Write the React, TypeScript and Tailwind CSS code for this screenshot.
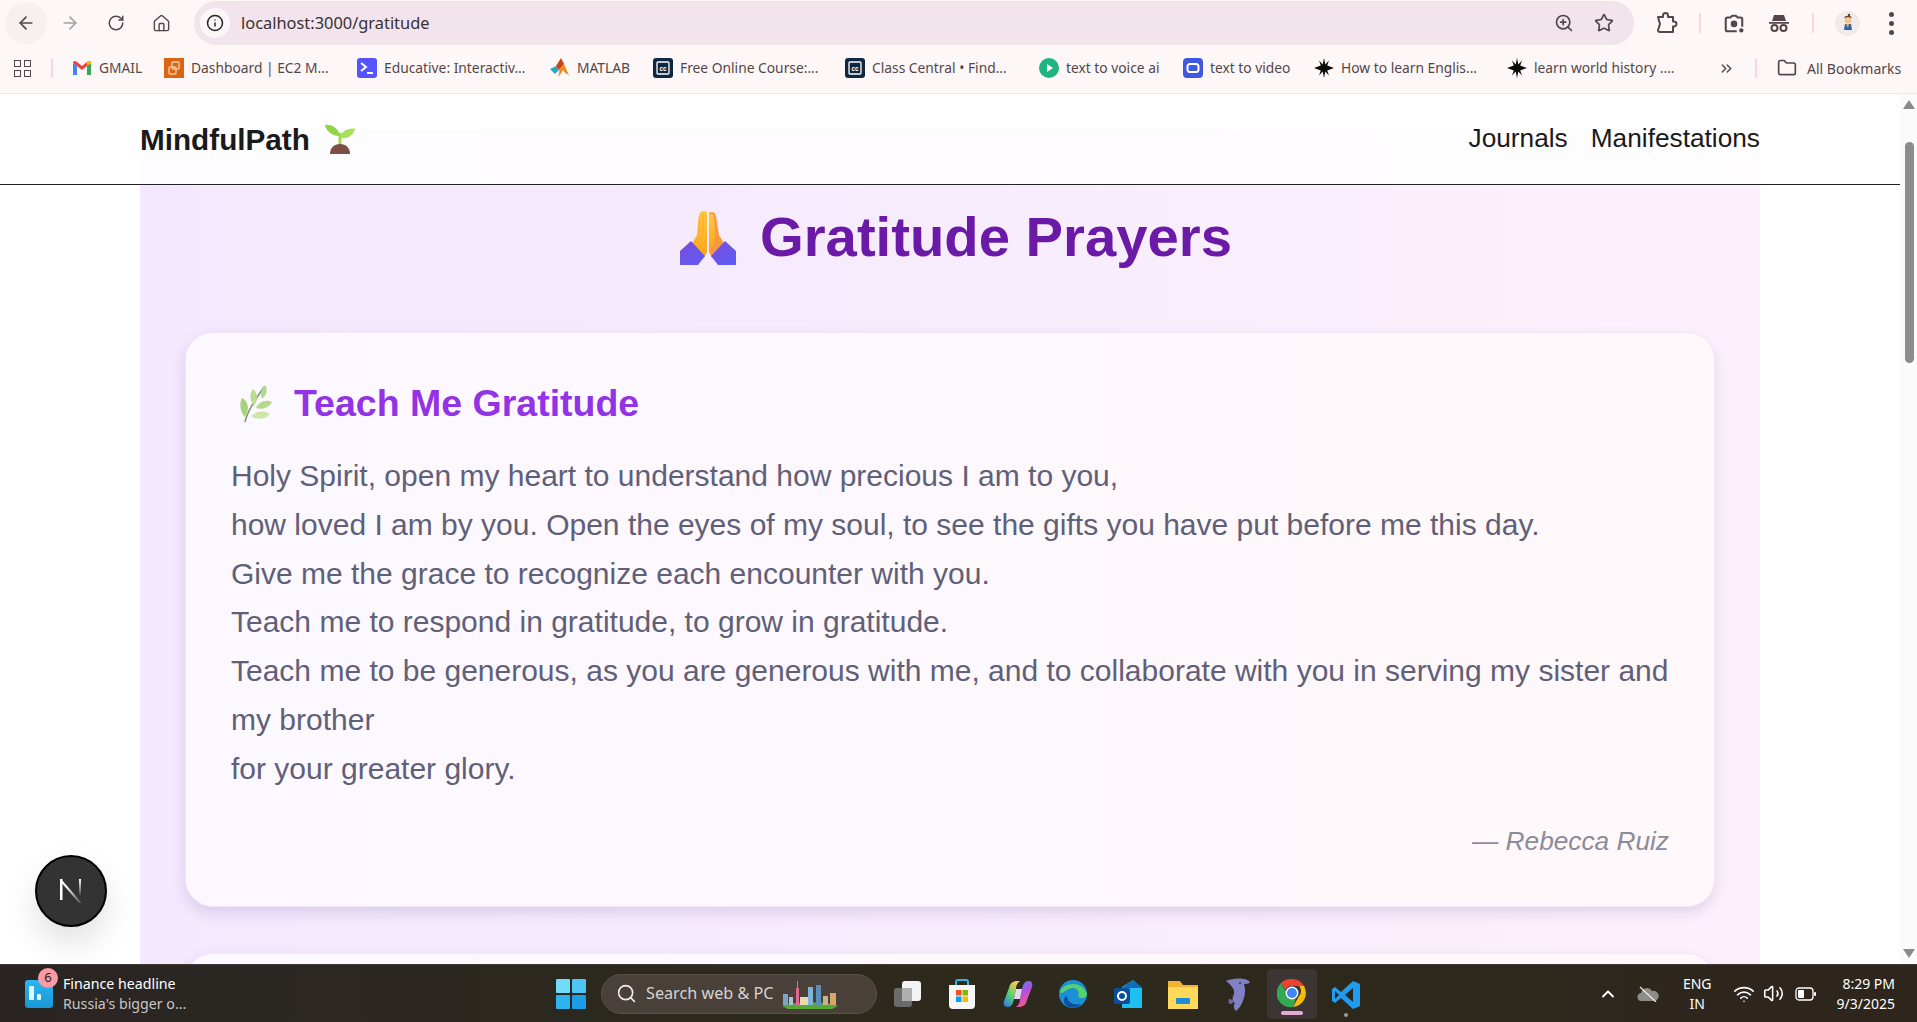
import {
  ArrowLeft,
  ArrowRight,
  ChevronUp,
  ChevronsRight,
  Folder,
  Home,
  Info,
  RotateCw,
  Search,
  Star,
  Volume2,
  Wifi,
  ZoomIn,
} from "lucide-react";

const BOOKMARKS = [
  { id: "gmail", label: "GMAIL", width: "w-[92px]" },
  { id: "ec2", label: "Dashboard | EC2 M...", width: "w-[193px]" },
  { id: "educative", label: "Educative: Interactiv...", width: "w-[193px]" },
  { id: "matlab", label: "MATLAB", width: "w-[103px]" },
  { id: "cc", label: "Free Online Course:...", width: "w-[192px]" },
  { id: "cc", label: "Class Central • Find...", width: "w-[194px]" },
  { id: "play", label: "text to voice ai", width: "w-[144px]" },
  { id: "video", label: "text to video", width: "w-[131px]" },
  { id: "star", label: "How to learn Englis...", width: "w-[193px]" },
  { id: "star", label: "learn world history ....", width: "w-[211px]" },
];

const CARD =
  "rounded-[28px] border border-[#f1e6fb] bg-gradient-to-r from-[#fbf8ff] to-[#fff8fa] shadow-[0_6px_14px_rgba(90,60,150,0.16)]";

function BookmarkIcon({ id }: { id: string }) {
  if (id === "gmail") {
    return (
      <svg viewBox="0 0 20 16" className="h-[16px] w-[20px]">
        <path d="M1 15V3l4 3v9z" fill="#4285f4" />
        <path d="M19 15V3l-4 3v9z" fill="#34a853" />
        <path d="M1 3c0-2 2-3 4-1l5 4 5-4c2-2 4-1 4 1l-4 3-5 4-5-4z" fill="#ea4335" />
        <path d="M15 2c2-2 4-1 4 1l-4 3z" fill="#fbbc04" />
      </svg>
    );
  }
  if (id === "ec2") {
    return (
      <svg viewBox="0 0 20 20" className="size-[20px]">
        <rect width="20" height="20" fill="#d86613" />
        <rect x="8" y="4" width="7" height="7" rx="1" fill="none" stroke="#f5c9a0" strokeWidth="1.4" />
        <rect x="5" y="9" width="7" height="7" rx="1" fill="none" stroke="#f5c9a0" strokeWidth="1.4" />
      </svg>
    );
  }
  if (id === "educative") {
    return (
      <svg viewBox="0 0 20 20" className="size-[20px]">
        <rect width="20" height="20" rx="3" fill="#5553ff" />
        <path d="M4 5l5 4-5 4" fill="none" stroke="#fff" strokeWidth="2" />
        <path d="M10 15h6" stroke="#fff" strokeWidth="2" />
      </svg>
    );
  }
  if (id === "matlab") {
    return (
      <svg viewBox="0 0 20 20" className="size-[20px]">
        <path d="M0 11l6-3 3 4-4 4z" fill="#2aa5c7" />
        <path d="M6 8l5-8 3 6-5 6z" fill="#c8451b" />
        <path d="M11 0c3 4 5 12 8 17-3-1-5-3-6-5-1 2-3 5-5 7 1-3 2-6 1-7l5-6z" fill="#ee8a1d" />
      </svg>
    );
  }
  if (id === "cc") {
    return (
      <svg viewBox="0 0 20 20" className="size-[20px]">
        <rect width="20" height="20" rx="3" fill="#0f2740" />
        <rect x="4" y="4" width="12" height="12" rx="1" fill="none" stroke="#fff" strokeWidth="1.3" />
        <text x="10" y="12.5" textAnchor="middle" fontSize="6.5" fontWeight="700" fill="#fff" fontFamily="Liberation Sans, sans-serif">
          cc
        </text>
      </svg>
    );
  }
  if (id === "play") {
    return (
      <svg viewBox="0 0 20 20" className="size-[20px]">
        <circle cx="10" cy="10" r="10" fill="#1fb583" />
        <path d="M8 6l6 4-6 4z" fill="#fff" />
      </svg>
    );
  }
  if (id === "video") {
    return (
      <svg viewBox="0 0 20 20" className="size-[20px]">
        <rect width="20" height="20" rx="4" fill="#4059e0" />
        <rect x="4.5" y="6" width="11" height="8" rx="2.5" fill="none" stroke="#fff" strokeWidth="2" />
      </svg>
    );
  }
  return (
    <svg viewBox="0 0 20 20" className="size-[20px]">
      <path
        d="M10 0l1.300 6.500L15 2.500l-1.800 5L20 10l-6.800 2.500 1.800 5-3.700-4L10 20l-1.300-6.500-3.700 4 1.800-5L0 10l6.800-2.500-1.800-5 3.700 4z"
        fill="#0b0b0b"
      />
    </svg>
  );
}

function Toolbar() {
  return (
    <div className="flex h-[46px] items-center bg-[#fef7f8] pl-[5px] text-[#544648]">
      <div className="flex size-[42px] items-center justify-center rounded-full bg-[#f6f0f1]">
        <ArrowLeft size={20} strokeWidth={2} />
      </div>
      <div className="ml-[2px] flex size-[42px] items-center justify-center text-[#a9a0a2]">
        <ArrowRight size={20} strokeWidth={2} />
      </div>
      <div className="ml-[4px] flex size-[42px] items-center justify-center">
        <RotateCw size={18} strokeWidth={2} />
      </div>
      <div className="ml-[3px] flex size-[42px] items-center justify-center">
        <Home size={19} strokeWidth={1.8} />
      </div>
      <div className="ml-[12px] flex h-[44px] w-[1440px] items-center rounded-full bg-[#f1e4ec] pl-[6px] pr-[20px]">
        <div className="flex size-[30px] items-center justify-center rounded-full bg-[#fdf6f8]">
          <Info size={18} strokeWidth={2} className="text-[#2b2324]" />
        </div>
        <span className="ml-[11px] font-['Noto_Sans',sans-serif] text-[16.400px] text-[#3a3032]">localhost:3000/gratitude</span>
        <div className="flex-1" />
        <ZoomIn size={20} strokeWidth={2} />
        <Star size={20} strokeWidth={2} className="ml-[20px]" />
      </div>
      <svg viewBox="0 0 24 24" className="ml-[20px] size-[24px]" fill="none" stroke="currentColor" strokeWidth="2" strokeLinejoin="round">
        <path d="M4 6h5V4.500a2.500 2.500 0 0 1 5 0V6h5v4.500h1a2.500 2.500 0 0 1 0 5h-1V21H6a2 2 0 0 1-2-2l2-6z" />
      </svg>
      <div className="ml-[21px] h-[20px] w-[2px] bg-[#fcd5de]" />
      <svg viewBox="0 0 24 24" className="ml-[22px] size-[22px]" fill="none" stroke="currentColor" strokeWidth="2.2">
        <path d="M3 19V8a2 2 0 0 1 2-2h3l2-2h4l2 2h3a2 2 0 0 1 2 2v8M3 19a2 2 0 0 0 2 2h10" />
        <circle cx="12" cy="13" r="2.500" fill="currentColor" />
        <circle cx="20" cy="20" r="1.300" fill="currentColor" />
      </svg>
      <svg viewBox="0 0 24 24" className="ml-[22px] size-[24px]" fill="currentColor">
        <path d="M7 4h10l2 6H5zM2 11h20v1.800H2z" />
        <circle cx="7.500" cy="17" r="3" fill="none" stroke="currentColor" strokeWidth="2" />
        <circle cx="16.500" cy="17" r="3" fill="none" stroke="currentColor" strokeWidth="2" />
      </svg>
      <div className="ml-[21px] h-[20px] w-[2px] bg-[#fcd5de]" />
      <div className="ml-[21px] flex size-[25px] items-center justify-center rounded-full bg-[#eeebe8]">
        <svg viewBox="0 0 20 20" className="size-[20px]">
          <circle cx="10" cy="7" r="3.500" fill="#f2c39b" />
          <path d="M6 5c1-3 7-3 8 0l-4-1z" fill="#6a3b1e" />
          <circle cx="11" cy="2" r="1.200" fill="#6a3b1e" />
          <path d="M7 11h6l1 6H6z" fill="#2f62b5" />
          <path d="M8 11h3l-1 4z" fill="#e8b33a" />
        </svg>
      </div>
      <div className="ml-[29px] flex flex-col gap-[4px]">
        <div className="size-[5px] rounded-full bg-[#544648]" />
        <div className="size-[5px] rounded-full bg-[#544648]" />
        <div className="size-[5px] rounded-full bg-[#544648]" />
      </div>
    </div>
  );
}

function BookmarksBar() {
  return (
    <div className="flex h-[48px] items-center border-b border-[#f2e4e6] bg-[#fef7f8] pb-[3px] font-['Noto_Sans',sans-serif] text-[13.800px] text-[#544648]">
      <div className="ml-[14px] grid grid-cols-2 gap-[3px]">
        <div className="size-[7px] border-[1.500px] border-[#544648]" />
        <div className="size-[7px] border-[1.500px] border-[#544648]" />
        <div className="size-[7px] border-[1.500px] border-[#544648]" />
        <div className="size-[7px] border-[1.500px] border-[#544648]" />
      </div>
      <div className="ml-[20px] h-[20px] w-[2px] bg-[#fcd5de]" />
      <div className="ml-[19px] flex items-center">
        {BOOKMARKS.map((b) => (
          <div key={b.label} className={`flex items-center gap-[7px] whitespace-nowrap ${b.width}`}>
            <BookmarkIcon id={b.id} />
            <span>{b.label}</span>
          </div>
        ))}
      </div>
      <ChevronsRight size={17} strokeWidth={2} />
      <div className="ml-[20px] h-[20px] w-[2px] bg-[#fcd5de]" />
      <Folder size={20} strokeWidth={2} className="ml-[20px]" />
      <span className="ml-[10px] whitespace-nowrap text-[14px]">All Bookmarks</span>
    </div>
  );
}

function Sprout() {
  return (
    <svg viewBox="0 0 30 30" className="-mt-[2px] h-[30px] w-[30px]">
      <path d="M13.500 9h3v13h-3z" fill="#a5d64a" />
      <path d="M14.500 12C7 12 1 7 0 1c6-1 14 3 14.500 11z" fill="#8ed444" />
      <path d="M15.500 14c0-6 6-10 14.500-9.500-1 6-6 10.500-14.500 9.500z" fill="#a4e25a" />
      <path d="M5 30c0-6 4-10 10-10s10 4 10 10z" fill="#7d4f47" />
    </svg>
  );
}

function PrayingHands() {
  return (
    <svg viewBox="0 0 56 56" className="h-[56px] w-[56px] shrink-0">
      <defs>
        <linearGradient id="hand" x1="0" y1="0" x2="0" y2="1">
          <stop offset="0" stopColor="#ffc83d" />
          <stop offset="1" stopColor="#fda21c" />
        </linearGradient>
        <linearGradient id="sleeve" x1="0" y1="0" x2="1" y2="1">
          <stop offset="0" stopColor="#7c4ddc" />
          <stop offset="1" stopColor="#5c5cf5" />
        </linearGradient>
      </defs>
      <path d="M27 3c-3-2-7-1-8 3l-2 20-6 10 13 13 3-6z" fill="url(#hand)" />
      <path d="M29 4c3-2 6-1 7 3l3 19 6 10-13 13-3-6z" fill="#fb9a3c" />
      <path d="M29 6c3-2 5-1 5 3l1 17c0 6-3 10-6 17z" fill="url(#hand)" />
      <path d="M23 5v18M19 8v14" stroke="#f5a623" strokeWidth="0.800" />
      <path d="M0 42l11-10 14 15-7 9H0z" fill="url(#sleeve)" />
      <path d="M56 42L45 32 31 47l7 9h18z" fill="url(#sleeve)" />
    </svg>
  );
}

function Herb() {
  return (
    <svg viewBox="0 0 32 38" className="ml-[9px] h-[38px] w-[32px] shrink-0">
      <path d="M5 37C7 27 14 16 24 2" fill="none" stroke="#7f9a72" strokeWidth="1.600" />
      <path d="M25 0c3 5 2 10-3 14-2-5-1-10 3-14z" fill="#b4d98a" />
      <path d="M13 4c5 4 5 11 1 17-4-5-5-12-1-17z" fill="#bcdc90" />
      <path d="M32 17c-3 6-10 8-16 6 3-6 10-9 16-6z" fill="#b4d98a" />
      <path d="M2 13c6 3 8 11 3 19-5-5-6-14-3-19z" fill="#a9d27e" />
      <path d="M30 29c-5 6-14 6-19 2 5-5 14-6 19-2z" fill="#cfe6a8" />
    </svg>
  );
}

function PrayerCard() {
  return (
    <div className={`${CARD} px-[45px] pb-[45px] pt-[48px]`}>
      <div className="flex items-center gap-[22px]">
        <Herb />
        <h2 className="text-[37.500px] font-bold leading-[45px] text-[#9333e6]">Teach Me Gratitude</h2>
      </div>
      <p className="mt-[26px] text-[30px] leading-[48.750px] text-[#5f6078]">
        Holy Spirit, open my heart to understand how precious I am to you,
        <br />
        how loved I am by you. Open the eyes of my soul, to see the gifts you have put before me this day.
        <br />
        Give me the grace to recognize each encounter with you.
        <br />
        Teach me to respond in gratitude, to grow in gratitude.
        <br />
        Teach me to be generous, as you are generous with me, and to collaborate with you in serving my sister and my brother
        <br />
        for your greater glory.
      </p>
      <p className="mt-[29px] text-right text-[26.250px] italic leading-[39px] text-[#8a8c9a]">— Rebecca Ruiz</p>
    </div>
  );
}

function WebPage() {
  return (
    <div className="relative min-w-0 flex-1 overflow-hidden bg-white font-['Liberation_Sans',Arial,sans-serif]">
      <header className="absolute inset-x-0 top-0 z-10 flex h-[91px] items-start justify-between border-b border-[#222] bg-white/85 pl-[140px] pr-[140px] pt-[26px] text-[#1a1a1a]">
        <div className="flex items-center gap-[15px]">
          <span className="text-[29.700px] font-bold leading-[40px]">MindfulPath</span>
          <Sprout />
        </div>
        <nav className="flex gap-[23px] text-[26.250px] leading-[36px]">
          <span>Journals</span>
          <span>Manifestations</span>
        </nav>
      </header>
      <main className="mx-[140px] mt-[35px] h-[1400px] bg-gradient-to-r from-[#f3e8fd] to-[#fcf1fb] px-[45px] pt-[76px]">
        <h1 className="flex items-center justify-center gap-[24px] pl-[12px] text-[56.250px] font-bold leading-[64px] text-[#6b1aa8]">
          <PrayingHands />
          Gratitude Prayers
        </h1>
        <div className="mt-[63px] flex flex-col gap-[46px]">
          <PrayerCard />
          <div className={`${CARD} h-[573px]`} />
        </div>
      </main>
      <button className="absolute bottom-[37px] left-[35px] z-20 flex size-[72px] items-center justify-center rounded-full border-2 border-black bg-[#333] shadow-[0_16px_32px_rgba(0,0,0,0.12)]">
        <svg viewBox="0 0 30 30" className="size-[30px]">
          <defs>
            <linearGradient id="nfade" x1="0" y1="0" x2="1" y2="1">
              <stop offset="0.3" stopColor="#fff" />
              <stop offset="1" stopColor="#fff" stopOpacity="0.1" />
            </linearGradient>
            <linearGradient id="nbar" x1="0" y1="0" x2="0" y2="1">
              <stop offset="0" stopColor="#fff" />
              <stop offset="1" stopColor="#fff" stopOpacity="0.1" />
            </linearGradient>
          </defs>
          <path d="M4 3h2.500v21H4z" fill="#fff" />
          <path d="M5 3l21 24h-3L4 5z" fill="url(#nfade)" />
          <path d="M23 3h2v16h-2z" fill="url(#nbar)" />
        </svg>
      </button>
    </div>
  );
}

function Scrollbar() {
  return (
    <div className="flex w-[17px] shrink-0 flex-col items-center bg-[#fbfbfb] pt-[6px]">
      <div className="h-0 w-0 border-x-[6px] border-b-[9px] border-x-transparent border-b-[#8a8a8a]" />
      <div className="ml-[1px] mt-[33px] h-[221px] w-[9px] rounded-full bg-[#8c8c8c]" />
      <div className="flex-1" />
      <div className="mb-[6px] h-0 w-0 border-x-[6px] border-t-[9px] border-x-transparent border-t-[#8a8a8a]" />
    </div>
  );
}

function TaskIcons() {
  return (
    <div className="flex items-center">
      <svg viewBox="0 0 30 30" className="size-[30px]">
        <rect width="14" height="14" rx="1" fill="#6fdcfa" />
        <rect x="16" width="14" height="14" rx="1" fill="#4cc7f5" />
        <rect y="16" width="14" height="14" rx="1" fill="#2db3ef" />
        <rect x="16" y="16" width="14" height="14" rx="1" fill="#1a9fe6" />
      </svg>
      <div className="ml-[15px] flex h-[40px] w-[276px] items-center rounded-full border border-[#5a504a] bg-[#4a403a] pl-[14px]">
        <Search size={21} strokeWidth={1.800} className="text-[#eee]" />
        <span className="ml-[9px] whitespace-nowrap text-[16.200px] text-[#d8d4d0]">Search web &amp; PC</span>
        <svg viewBox="0 0 56 30" className="ml-[8px] h-[30px] w-[56px]">
          <path d="M0 27c10-5 46-5 56 0l-6 3H6z" fill="#58a83a" />
          <rect x="1" y="15" width="5" height="11" fill="#7aa7c4" />
          <rect x="7" y="18" width="4" height="8" fill="#a9c3d4" />
          <rect x="14" y="9" width="3" height="17" fill="#e2678f" />
          <rect x="15" y="2" width="1" height="8" fill="#e2678f" />
          <rect x="18" y="18" width="11" height="8" fill="#e8d9b0" />
          <rect x="26" y="8" width="5" height="18" fill="#7fb3d8" />
          <rect x="34" y="6" width="5" height="20" fill="#5b8fb8" />
          <rect x="41" y="17" width="5" height="9" fill="#c9b28c" />
          <rect x="48" y="14" width="6" height="12" fill="#d9a66a" />
        </svg>
      </div>
      <div className="ml-[16px] flex w-[30px] items-center justify-center">
        <svg viewBox="0 0 30 30" className="size-[30px]">
          <rect x="1" y="9" width="18" height="19" rx="3" fill="#6b6b6b" />
          <rect x="9" y="2" width="19" height="20" rx="3" fill="#f4f4f4" />
          <rect x="9" y="9" width="10" height="13" fill="#b0b0b0" />
        </svg>
      </div>
      <svg viewBox="0 0 30 30" className="ml-[24px] size-[30px]">
        <path d="M9 6V3a2 2 0 0 1 2-2h8a2 2 0 0 1 2 2v3" fill="none" stroke="#33b5e5" strokeWidth="2" />
        <path d="M2 6h26v20a4 4 0 0 1-4 4H6a4 4 0 0 1-4-4z" fill="#f6f6f6" />
        <rect x="9" y="11" width="5.500" height="5.500" fill="#f25022" />
        <rect x="15.500" y="11" width="5.500" height="5.500" fill="#7fba00" />
        <rect x="9" y="17.500" width="5.500" height="5.500" fill="#00a4ef" />
        <rect x="15.500" y="17.500" width="5.500" height="5.500" fill="#ffb900" />
      </svg>
      <svg viewBox="0 0 30 30" className="ml-[26px] size-[30px]">
        <defs>
          <linearGradient id="copa" x1="0" y1="1" x2="0.6" y2="0">
            <stop offset="0" stopColor="#2f6bf0" />
            <stop offset="0.5" stopColor="#4fd07a" />
            <stop offset="1" stopColor="#f7c948" />
          </linearGradient>
          <linearGradient id="copb" x1="0" y1="0" x2="0.4" y2="1">
            <stop offset="0" stopColor="#2f9bf0" />
            <stop offset="0.5" stopColor="#b14fe0" />
            <stop offset="1" stopColor="#f05a8c" />
          </linearGradient>
        </defs>
        <path d="M6 9c1-5 4-7 8-7h3c-3 2-4 5-4 8l-2 10c-1 5-3 8-6 8-4 0-5-2-4-6z" fill="url(#copa)" />
        <path d="M24 21c-1 5-4 7-8 7h-3c3-2 4-5 4-8l2-10c1-5 3-8 6-8 4 0 5 2 4 6z" fill="url(#copb)" />
        <path d="M13 10h6l-2 10h-6z" fill="#e9d7ef" />
      </svg>
      <svg viewBox="0 0 30 30" className="ml-[25px] size-[30px]">
        <circle cx="15" cy="15" r="14" fill="#1b8fd8" />
        <path d="M2 13C4 4 24 0 29 15c0 4-5 5-9 3 3-6-3-11-9-8-5 2-7 6-9 3z" fill="#58d06a" />
        <path d="M9 17c0 6 6 10 14 8-4 5-12 5-16 0-2-3-1-8 2-8z" fill="#0c4f9e" />
      </svg>
      <svg viewBox="0 0 30 30" className="ml-[25px] size-[30px]">
        <path d="M9 8L20 1l9 8v20H9z" fill="#1ec0f2" />
        <path d="M20 1l9 8H9z" fill="#0f6cbd" />
        <rect x="1" y="9" width="16" height="16" rx="2" fill="#0a4f9e" />
        <circle cx="9" cy="17" r="4" fill="none" stroke="#fff" strokeWidth="2" />
      </svg>
      <svg viewBox="0 0 30 30" className="ml-[25px] size-[30px]">
        <path d="M0 2h12l3 4h15v24H0z" fill="#f2b233" />
        <path d="M0 8h30v22H0z" fill="#ffd85c" />
        <rect x="8" y="19" width="14" height="6" rx="1" fill="#1a8fd6" />
      </svg>
      <svg viewBox="0 0 26 34" className="ml-[27px] h-[34px] w-[26px]">
        <path d="M1 4c6-3 20-4 24 1-1 2-4 2-6 2 3 9-1 19-5 24l-3 3c-2-2-3-5-1-8-3-2-3-5-1-9 1-5-3-9-8-13z" fill="#8080c6" />
        <path d="M6 27c-2 0-3-2-2-5 2 0 4 1 5 3z" fill="#6a6ab0" />
        <circle cx="15" cy="6" r="1" fill="#333" />
      </svg>
      <div className="ml-[16px] flex h-[50px] w-[50px] flex-col items-center rounded-[4px] bg-[#3b3533] pt-[9px]">
        <svg viewBox="0 0 30 30" className="size-[30px]">
          <path d="M15 1a14 14 0 0 1 12 7H15a7 7 0 0 0-6.500 4L4 5A14 14 0 0 1 15 1z" fill="#ea4335" />
          <path d="M27 8a14 14 0 0 1-11 21l6-11a7 7 0 0 0 0-10z" fill="#fbbc04" />
          <path d="M4 5l7 12a7 7 0 0 0 8 4l-3 8A14 14 0 0 1 4 5z" fill="#34a853" />
          <circle cx="15" cy="15" r="6.500" fill="#fff" />
          <circle cx="15" cy="15" r="5" fill="#4285f4" />
        </svg>
        <div className="mt-[3px] h-[4px] w-[22px] rounded-full bg-[#e3a8d4]" />
      </div>
      <div className="ml-[14px] flex flex-col items-center pt-[9px]">
        <svg viewBox="0 0 30 30" className="size-[30px]">
          <path d="M22 1l7 3v22l-7 3-12-11-6 5-3-2V9l3-2 6 5z" fill="#1f9cf0" />
          <path d="M22 8l-8 7 8 7z" fill="#2b2420" />
          <path d="M4 11l4 4-4 4z" fill="#2b2420" />
        </svg>
        <div className="mt-[3px] size-[4px] rounded-full bg-[#9a9a9a]" />
      </div>
    </div>
  );
}

function Taskbar() {
  return (
    <div className="flex h-[58px] shrink-0 items-center border-t border-[#3f3a37] bg-gradient-to-r from-[#2a2523] via-[#2d2a1c] to-[#2e251c] font-['Noto_Sans',sans-serif] text-white">
      <div className="relative ml-[25px] h-[28px] w-[28px] shrink-0">
        <div className="absolute inset-0 rounded-[3px] bg-gradient-to-b from-[#2bb5f0] to-[#1997d6]" />
        <div className="absolute bottom-[8px] left-[4px] h-[14px] w-[5px] rounded-[1px] bg-[#e3f5fd]" />
        <div className="absolute bottom-[8px] left-[12px] h-[6px] w-[4px] rounded-[1px] bg-[#e3f5fd]" />
        <div className="absolute -right-[5px] -top-[12px] flex size-[20px] items-center justify-center rounded-full bg-[#ff9aa2] text-[13px] text-[#222]">
          6
        </div>
      </div>
      <div className="ml-[10px] w-[493px] shrink-0 text-[14.200px] leading-[20px]">
        <div>Finance headline</div>
        <div className="text-[#c8c6c4]">Russia's bigger o...</div>
      </div>
      <TaskIcons />
      <div className="flex-1" />
      <ChevronUp size={20} strokeWidth={2.200} />
      <svg viewBox="0 0 22 16" className="ml-[19px] h-[16px] w-[22px]">
        <path d="M5 15a4 4 0 0 1-1-8 6 6 0 0 1 11-2 5 5 0 0 1 3 10z" fill="#8f8c88" />
        <path d="M3 1l16 15" stroke="#eee" strokeWidth="1.200" />
      </svg>
      <div className="ml-[24px] text-center text-[14px] leading-[20px]">
        <div>ENG</div>
        <div>IN</div>
      </div>
      <Wifi size={22} strokeWidth={1.800} className="ml-[21px]" />
      <Volume2 size={21} strokeWidth={1.800} className="ml-[8px]" />
      <svg viewBox="0 0 22 14" className="ml-[11px] h-[14px] w-[22px]">
        <rect x="1" y="1" width="17" height="12" rx="3" fill="none" stroke="#fff" strokeWidth="1.300" />
        <rect x="3" y="3" width="6" height="8" rx="1" fill="#fff" />
        <rect x="19" y="5" width="2" height="4" rx="1" fill="#fff" />
      </svg>
      <div className="ml-[20px] mr-[22px] text-right text-[14px] leading-[20px]">
        <div>8:29 PM</div>
        <div>9/3/2025</div>
      </div>
    </div>
  );
}

export default function App() {
  return (
    <div className="flex h-screen flex-col overflow-hidden bg-white">
      <Toolbar />
      <BookmarksBar />
      <div className="flex min-h-0 flex-1">
        <WebPage />
        <Scrollbar />
      </div>
      <Taskbar />
    </div>
  );
}
